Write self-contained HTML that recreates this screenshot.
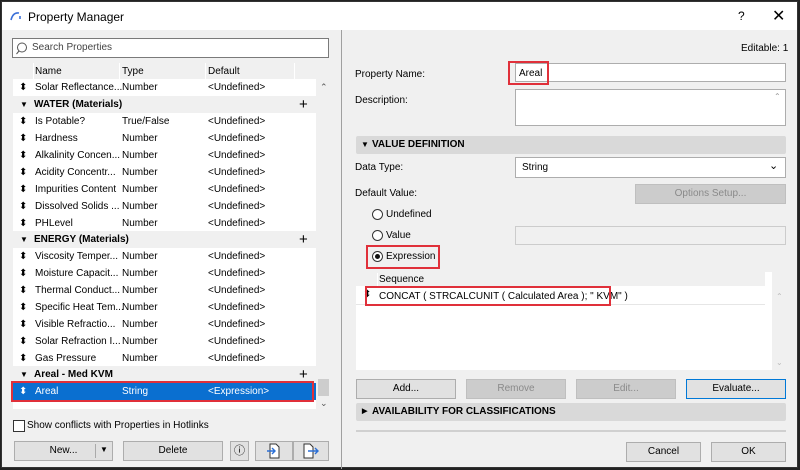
<!DOCTYPE html>
<html><head><style>
*{margin:0;padding:0;box-sizing:border-box}
body{width:800px;height:470px;overflow:hidden;background:#222;font-family:"Liberation Sans",Arial,sans-serif;font-size:10px;color:#000}
.win{position:absolute;left:1px;top:1px;width:797px;height:467px;background:#f0f0f0;border:1px solid #333}
.tb{position:absolute;left:0;top:0;width:100%;height:28px;background:#fff}
.a{position:absolute;white-space:nowrap}
.box{position:absolute;background:#fff;border:1px solid #adadad}
.btn{position:absolute;background:#e1e1e1;border:1px solid #adadad;text-align:center;line-height:18px;height:20px}
.dis{background:#cccccc;border-color:#bfbfbf;color:#8a8a8a}
.red{position:absolute;border:2px solid #e0303a}
.row{position:absolute;left:11px;width:303px;height:17px;background:#fff;line-height:17px}
.grp{background:#f0f0f0;font-weight:bold}
.row span{position:absolute}
.sec{position:absolute;left:354px;width:430px;height:18px;background:#d9d9d9;font-weight:bold;line-height:18px;padding-left:16px;border-radius:2px}
.rad{position:absolute;width:11px;height:11px;border:1px solid #333;border-radius:50%;background:#fff}
</style></head><body>
<div class="win">
<div class="tb">
<svg class="a" style="left:8px;top:9px" width="12" height="10"><path d="M1 9 Q3 1 9 2" stroke="#3a6fd8" stroke-width="1.6" fill="none"/><path d="M10 5 v3" stroke="#3a6fd8" stroke-width="1.6"/></svg>
<div class="a" style="left:26px;top:8px;font-size:12px">Property Manager</div>
<div class="a" style="left:736px;top:7px;font-size:12px">?</div>
<div class="a" style="left:770px;top:4px;font-size:16px">✕</div>
</div>
<div class="box" style="left:10px;top:36px;width:317px;height:20px;border-color:#7a7a7a"></div>
<svg class="a" style="left:14px;top:40px" width="13" height="13"><circle cx="6" cy="5.5" r="4.5" stroke="#555" fill="none"/><path d="M3 9 L0.5 12" stroke="#555"/></svg>
<div class="a" style="left:30px;top:40px;color:#444">Search Properties</div>
<div class="a" style="left:10px;top:61px;width:303px;height:16px;background:#f0f0f0"></div>
<div class="a" style="left:33px;top:64px">Name</div><div class="a" style="left:120px;top:64px">Type</div><div class="a" style="left:206px;top:64px">Default</div>
<div class="a" style="left:31px;top:61px;width:1px;height:16px;background:#fff"></div>
<div class="a" style="left:117px;top:61px;width:1px;height:16px;background:#fff"></div>
<div class="a" style="left:203px;top:61px;width:1px;height:16px;background:#fff"></div>
<div class="a" style="left:292px;top:61px;width:1px;height:16px;background:#fff"></div>
<div class="a" style="left:11px;top:77px;width:303px;height:330px;background:#fff"></div>
<div class="a" style="left:318px;top:80px;color:#555;font-size:9px">⌃</div>
<div class="a" style="left:316px;top:377px;width:11px;height:17px;background:#cdcdcd"></div>
<div class="a" style="left:318px;top:396px;color:#555;font-size:9px">⌄</div>

<div class="row" style="top:77px"><span style="left:6px">⬍</span><span style="left:22px">Solar Reflectance...</span><span style="left:109px">Number</span><span style="left:195px">&lt;Undefined&gt;</span></div>
<div class="row grp" style="top:94px"><span style="left:7px;font-size:8px">▼</span><span style="left:21px">WATER (Materials)</span><span style="left:286px;font-weight:normal;font-size:15px">+</span></div>
<div class="row" style="top:111px"><span style="left:6px">⬍</span><span style="left:22px">Is Potable?</span><span style="left:109px">True/False</span><span style="left:195px">&lt;Undefined&gt;</span></div>
<div class="row" style="top:128px"><span style="left:6px">⬍</span><span style="left:22px">Hardness</span><span style="left:109px">Number</span><span style="left:195px">&lt;Undefined&gt;</span></div>
<div class="row" style="top:145px"><span style="left:6px">⬍</span><span style="left:22px">Alkalinity Concen...</span><span style="left:109px">Number</span><span style="left:195px">&lt;Undefined&gt;</span></div>
<div class="row" style="top:162px"><span style="left:6px">⬍</span><span style="left:22px">Acidity Concentr...</span><span style="left:109px">Number</span><span style="left:195px">&lt;Undefined&gt;</span></div>
<div class="row" style="top:179px"><span style="left:6px">⬍</span><span style="left:22px">Impurities Content</span><span style="left:109px">Number</span><span style="left:195px">&lt;Undefined&gt;</span></div>
<div class="row" style="top:196px"><span style="left:6px">⬍</span><span style="left:22px">Dissolved Solids ...</span><span style="left:109px">Number</span><span style="left:195px">&lt;Undefined&gt;</span></div>
<div class="row" style="top:213px"><span style="left:6px">⬍</span><span style="left:22px">PHLevel</span><span style="left:109px">Number</span><span style="left:195px">&lt;Undefined&gt;</span></div>
<div class="row grp" style="top:229px"><span style="left:7px;font-size:8px">▼</span><span style="left:21px">ENERGY (Materials)</span><span style="left:286px;font-weight:normal;font-size:15px">+</span></div>
<div class="row" style="top:246px"><span style="left:6px">⬍</span><span style="left:22px">Viscosity Temper...</span><span style="left:109px">Number</span><span style="left:195px">&lt;Undefined&gt;</span></div>
<div class="row" style="top:263px"><span style="left:6px">⬍</span><span style="left:22px">Moisture Capacit...</span><span style="left:109px">Number</span><span style="left:195px">&lt;Undefined&gt;</span></div>
<div class="row" style="top:280px"><span style="left:6px">⬍</span><span style="left:22px">Thermal Conduct...</span><span style="left:109px">Number</span><span style="left:195px">&lt;Undefined&gt;</span></div>
<div class="row" style="top:297px"><span style="left:6px">⬍</span><span style="left:22px">Specific Heat Tem...</span><span style="left:109px">Number</span><span style="left:195px">&lt;Undefined&gt;</span></div>
<div class="row" style="top:314px"><span style="left:6px">⬍</span><span style="left:22px">Visible Refractio...</span><span style="left:109px">Number</span><span style="left:195px">&lt;Undefined&gt;</span></div>
<div class="row" style="top:331px"><span style="left:6px">⬍</span><span style="left:22px">Solar Refraction I...</span><span style="left:109px">Number</span><span style="left:195px">&lt;Undefined&gt;</span></div>
<div class="row" style="top:348px"><span style="left:6px">⬍</span><span style="left:22px">Gas Pressure</span><span style="left:109px">Number</span><span style="left:195px">&lt;Undefined&gt;</span></div>
<div class="row grp" style="top:364px"><span style="left:7px;font-size:8px">▼</span><span style="left:21px">Areal - Med KVM</span><span style="left:286px;font-weight:normal;font-size:15px">+</span></div>
<div class="row" style="top:381px;background:#0a6fd0;color:#fff"><span style="left:6px">⬍</span><span style="left:22px">Areal</span><span style="left:109px">String</span><span style="left:195px">&lt;Expression&gt;</span></div>
<div class="red" style="left:9px;top:379px;width:303px;height:21px"></div>

<div class="a" style="left:11px;top:418px;width:12px;height:12px;border:1px solid #333;background:#fff"></div>
<div class="a" style="left:25px;top:418px">Show conflicts with Properties in Hotlinks</div>
<div class="btn" style="left:12px;top:439px;width:99px">New...</div>
<div class="a" style="left:93px;top:442px;width:1px;height:14px;background:#aaa"></div>
<div class="a" style="left:98px;top:443px;font-size:8px">▼</div>
<div class="btn" style="left:121px;top:439px;width:100px">Delete</div>
<div class="btn" style="left:228px;top:439px;width:19px;font-size:11px">ⓘ</div>
<div class="btn" style="left:253px;top:439px;width:38px">
<svg width="14" height="16" style="margin-top:1px"><path d="M3 1h6l3 3v11H3z" fill="#fff" stroke="#333"/><path d="M0 8h8M5 5l3 3-3 3" stroke="#2a6fd6" fill="none" stroke-width="1.4"/></svg></div>
<div class="btn" style="left:291px;top:439px;width:36px">
<svg width="16" height="16" style="margin-top:1px"><path d="M1 1h6l3 3v11H1z" fill="#fff" stroke="#333"/><path d="M5 8h10M12 5l3 3-3 3" stroke="#2a6fd6" fill="none" stroke-width="1.4"/></svg></div>

<div class="a" style="left:339px;top:28px;width:1px;height:439px;background:#a0a0a0"></div>
<div class="a" style="left:739px;top:41px">Editable: 1</div>
<div class="a" style="left:353px;top:67px">Property Name:</div>
<div class="box" style="left:513px;top:61px;width:271px;height:19px"></div>
<div class="a" style="left:517px;top:66px">Areal</div>
<div class="red" style="left:506px;top:59px;width:41px;height:24px"></div>
<div class="a" style="left:353px;top:93px">Description:</div>
<div class="box" style="left:513px;top:87px;width:271px;height:37px"></div>
<div class="a" style="left:772px;top:90px;color:#999;font-size:8px">⌃</div>
<div class="sec" style="top:134px"><span style="position:absolute;left:5px;font-size:8px">▼</span>VALUE DEFINITION</div>
<div class="a" style="left:353px;top:160px">Data Type:</div>
<div class="box" style="left:513px;top:155px;width:271px;height:21px"></div>
<div class="a" style="left:520px;top:160px">String</div>
<div class="a" style="left:767px;top:157px;font-size:11px">⌄</div>
<div class="a" style="left:353px;top:186px">Default Value:</div>
<div class="btn dis" style="left:633px;top:182px;width:151px">Options Setup...</div>
<div class="rad" style="left:370px;top:207px"></div><div class="a" style="left:384px;top:207px">Undefined</div>
<div class="rad" style="left:370px;top:228px"></div><div class="a" style="left:384px;top:228px">Value</div>
<div class="a" style="left:513px;top:224px;width:271px;height:19px;background:#f0f0f0;border:1px solid #ccc"></div>
<div class="rad" style="left:370px;top:249px"></div><div class="a" style="left:373px;top:252px;width:5px;height:5px;border-radius:50%;background:#111"></div>
<div class="a" style="left:384px;top:249px">Expression</div>
<div class="red" style="left:364px;top:243px;width:74px;height:24px"></div>
<div class="a" style="left:354px;top:270px;width:416px;height:98px;background:#fff"></div>
<div class="a" style="left:354px;top:270px;width:409px;height:15px;background:#f0f0f0;border-bottom:1px solid #fff"></div>
<div class="a" style="left:375px;top:271px;width:1px;height:14px;background:#fff"></div>
<div class="a" style="left:377px;top:272px">Sequence</div>
<div class="a" style="left:361px;top:287px">⬍</div>
<div class="a" style="left:377px;top:289px">CONCAT ( STRCALCUNIT ( Calculated Area ); " KVM" )</div>
<div class="a" style="left:354px;top:302px;width:409px;height:1px;background:#e6e6e6"></div>
<div class="red" style="left:363px;top:284px;width:246px;height:20px"></div>
<div class="a" style="left:774px;top:290px;color:#bbb;font-size:8px">⌃</div>
<div class="a" style="left:774px;top:356px;color:#bbb;font-size:8px">⌄</div>
<div class="btn" style="left:354px;top:377px;width:100px">Add...</div>
<div class="btn dis" style="left:464px;top:377px;width:100px">Remove</div>
<div class="btn dis" style="left:574px;top:377px;width:100px">Edit...</div>
<div class="btn" style="left:684px;top:377px;width:100px;border:1px solid #0078d7">Evaluate...</div>
<div class="sec" style="top:401px"><span style="position:absolute;left:6px;font-size:7px">▶</span>AVAILABILITY FOR CLASSIFICATIONS</div>
<div class="a" style="left:354px;top:428px;width:430px;height:2px;background:#d0d0d0"></div>
<div class="btn" style="left:624px;top:440px;width:75px">Cancel</div>
<div class="btn" style="left:709px;top:440px;width:75px">OK</div>
</div>
</body></html>
